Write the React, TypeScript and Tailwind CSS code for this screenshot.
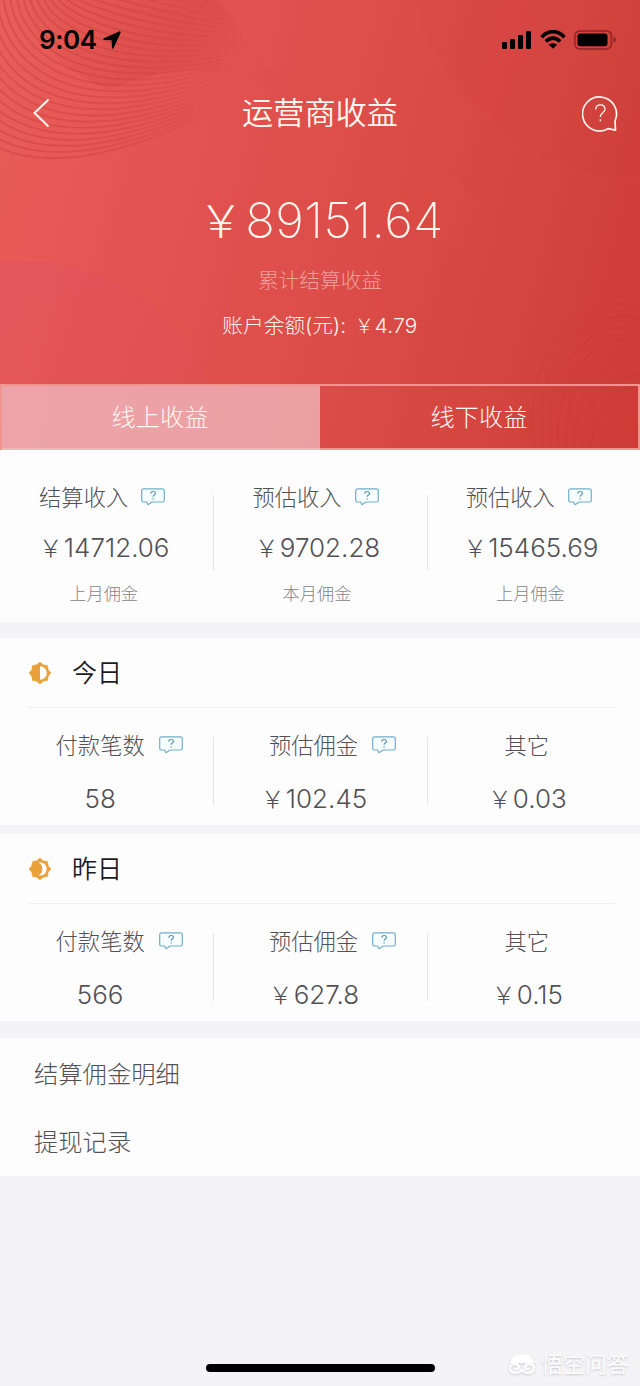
import type { ReactNode } from "react";

const CJK = "font-['Inter','Noto_Sans_CJK_SC',sans-serif]";

function Yen() {
  return <span className="inline-block w-[1em] text-center"><span className="text-[0.92em]">{"\uFFE5"}</span></span>;
}

function HelpBubble() {
  return (
    <svg width="24" height="18" viewBox="0 0 24 18" fill="#f6fdfe" stroke="#72adc9" strokeWidth="1.2" strokeLinejoin="round" className="mb-[2px]">
      <path d="M2.5.8h19a1.8 1.8 0 0 1 1.8 1.8v9.6a1.8 1.8 0 0 1-1.8 1.8H11.2L7 16.7 5.6 14H2.5A1.8 1.8 0 0 1 .7 12.200V2.600A1.800 1.800 0 0 1 2.500.8Z" />
      <path d="M9.700 5.600c.1-1.400 1-2.100 2.400-2.100s2.400.8 2.400 1.900c0 1.600-2.300 1.500-2.400 3.300M12.100 10.200v1.200" fill="none" stroke="#5f95ae" />
    </svg>
  );
}

function Waves() {
  const lines = Array.from({ length: 38 }, (_, i) => {
    const x = -76 + i * 6.6;
    const d = x - 5;
    return `M${x} -6C${x + 4} ${60 - d * 0.92} ${x + 80} ${118 - d * 1.35} 250 ${60 - d * 0.4}`;
  });
  return (
    <svg className="absolute inset-0" width="640" height="450" viewBox="0 0 640 450" fill="none">
      <defs>
        <linearGradient id="fade" x1="0" y1="0" x2="245" y2="40" gradientUnits="userSpaceOnUse">
          <stop offset="0" stopColor="#bd3533" stopOpacity=".36" />
          <stop offset=".55" stopColor="#bd3533" stopOpacity=".3" />
          <stop offset="1" stopColor="#bd3533" stopOpacity="0" />
        </linearGradient>
        <linearGradient id="hill" x1="60" y1="260" x2="170" y2="384" gradientUnits="userSpaceOnUse">
          <stop offset="0" stopColor="#dd5268" stopOpacity=".34" />
          <stop offset="1" stopColor="#dd4f5c" stopOpacity=".24" />
        </linearGradient>
        <linearGradient id="shade" x1="40" y1="0" x2="200" y2="110" gradientUnits="userSpaceOnUse">
          <stop offset="0" stopColor="#c93d3a" stopOpacity=".05" />
          <stop offset=".7" stopColor="#c93d3a" stopOpacity=".28" />
          <stop offset="1" stopColor="#c93d3a" stopOpacity=".03" />
        </linearGradient>
      </defs>
      <path d="M30 0H218C240 20 240 45 262 62C280 76 292 90 290 108C240 62 170 62 110 90C60 70 30 40 30 0Z" fill="url(#shade)" />
      {lines.map((d) => (
        <path key={d} d={d} stroke="url(#fade)" strokeWidth="1.900" />
      ))}
      <path d="M0 261C100 254 188 312 210 392V450H0Z" fill="url(#hill)" />
      <path d="M415 0C430 75 520 175 640 180V0Z" fill="#cc3a38" fillOpacity=".1" />
      <path d="M370 140C430 135 480 185 490 245C440 262 390 220 370 140Z" fill="#ea5b52" fillOpacity=".08" />
      {[0, 1, 2, 3, 4, 5, 6, 7].map((i) => (
        <path key={i} d={`M${535 + i * 8} 450C${520 + i * 10} ${350 + i * 10} ${580 + i * 5} ${292 + i * 12} 640 ${306 + i * 12}`} stroke="#b92f2e" strokeOpacity=".05" strokeWidth="2.500" />
      ))}
    </svg>
  );
}

function StatusBar() {
  return (
    <div className="flex h-[79px] items-center justify-between pl-[39px] pr-[23px] text-black">
      <div className="flex items-center gap-[6px]">
        <span className="text-[26px] font-semibold leading-[30px] tracking-[-0.4px]">9:04</span>
        <svg width="18" height="18" viewBox="0 0 18 18" fill="currentColor">
          <path d="M16 .5 1 7.300c-1.200.6-.9 1.500.2 1.600l7.400.4.4 7.400c.1 1.200 1.100 1.500 1.600.3L17.500 2C18 .8 17.200 0 16 .5Z" />
        </svg>
      </div>
      <div className="flex items-center gap-[8px]">
        <svg width="30" height="18" viewBox="0 0 30 18" fill="currentColor">
          <rect x="0" y="11" width="5" height="7" rx="1.200" />
          <rect x="8" y="8" width="5" height="10" rx="1.200" />
          <rect x="16" y="4" width="5" height="14" rx="1.200" />
          <rect x="24" y="0" width="5" height="18" rx="1.200" />
        </svg>
        <svg width="26" height="19" viewBox="0 0 26 19" fill="none" stroke="currentColor" strokeWidth="3.600">
          <path d="M1.600 7.200C8-.1 18-.1 24.400 7.200" />
          <path d="M5.900 11.500c4.200-4.500 10-4.500 14.200 0" />
          <path d="M13 18.800 8.900 14.700c2.400-2 5.800-2 8.200 0Z" fill="currentColor" stroke="none" />
        </svg>
        <svg width="43" height="20" viewBox="0 0 43 20" fill="none">
          <rect x=".9" y=".9" width="36.500" height="18" rx="5" stroke="#8d2423" strokeWidth="1.500" />
          <rect x="3.500" y="3.500" width="30" height="12.800" rx="2.800" fill="#000" />
          <path d="M39.500 6.800c3 .8 3 5.500 0 6.300Z" fill="#8d2423" />
        </svg>
      </div>
    </div>
  );
}

function Cell({ label, value, yen, note, help, today }: { label: string; value: string; yen?: boolean; note?: string; help?: boolean; today?: boolean }) {
  return (
    <div className={today ? "flex flex-col items-center pr-[13px]" : "flex flex-col items-center pr-[6px]"}>
      <div className={today ? (help ? "flex h-8 items-center gap-[14px] pl-[38px]" : "flex h-8 items-center") : "flex h-8 items-center gap-[13px] pr-[3px]"}>
        <span className="whitespace-nowrap text-[22.3px] font-light leading-8">{label}</span>
        {help && <HelpBubble />}
      </div>
      <div className={today ? "mt-[17px] flex h-10 items-center text-[26px] font-light leading-10" : "mt-[14px] flex h-10 items-center text-[26px] font-light leading-10"}>
        {yen && <Yen />}
        <span>{value}</span>
      </div>
      {note && <div className="mt-[14px] text-[17.200px] font-light leading-6 text-[#858489]">{note}</div>}
    </div>
  );
}

function Columns({ children, tall }: { children: ReactNode; tall?: boolean }) {
  return (
    <div className={tall ? "relative grid h-[172px] grid-cols-3 pt-8" : "relative grid h-[117px] grid-cols-3 pt-[22px]"}>
      {children}
      <div className={tall ? "absolute left-[213px] top-[45px] h-[75px] w-px bg-[#e6e5ea]" : "absolute left-[213px] top-[29px] h-[68px] w-px bg-[#e6e5ea]"} />
      <div className={tall ? "absolute left-[427px] top-[45px] h-[75px] w-px bg-[#e6e5ea]" : "absolute left-[427px] top-[29px] h-[68px] w-px bg-[#e6e5ea]"} />
    </div>
  );
}

function DayIcon({ moon }: { moon?: boolean }) {
  return (
    <svg width="24" height="24" viewBox="0 0 24 24">
      <path d="M12 1 14.900 3.800 19.500 4.500 20.200 8.700 23 12 20.200 15.300 19.500 19.500 15.300 20.200 12 23 8.700 20.200 4.500 19.500 3.800 15.300 1 12 3.800 8.700 4.500 4.500 8.700 3.800Z" fill="#e9a23b" stroke="#e9a23b" strokeWidth=".6" strokeLinejoin="round" />
      {moon ? (
        <path d="M10.500 5.600a6.600 6.600 0 1 1 0 12.800 7.200 7.200 0 0 0 0-12.800Z" fill="#fff" />
      ) : (
        <path d="M12 5.200a6.800 6.800 0 0 1 0 13.600Z" fill="#fff" />
      )}
    </svg>
  );
}

function Day({ title, count, estimate, other, moon }: { title: string; count: string; estimate: string; other: string; moon?: boolean }) {
  return (
    <section className="bg-[#fefdfe]">
      <div className="mr-[25px] ml-7 flex h-[70px] items-center gap-5 border-b border-[#f1f0f4]">
        <DayIcon moon={moon} />
        <h2 className="text-[25px] font-[350] leading-8 text-[#1c1b1f]">{title}</h2>
      </div>
      <Columns>
        <Cell today help label="付款笔数" value={count} />
        <Cell today help yen label="预估佣金" value={estimate} />
        <Cell today yen label="其它" value={other} />
      </Columns>
    </section>
  );
}

export default function App() {
  return (
    <main className={`${CJK} relative flex h-[1386px] w-[640px] flex-col overflow-hidden bg-[#f4f3f6] text-[#525155]`}>
      <header className="relative h-[450px] bg-[linear-gradient(105deg,#e95e59_0%,#e25351_30%,#dc4c48_55%,#d44540_78%,#cd3b37_100%)]">
        <Waves />
        <div className="relative text-[#fff6ee]">
          <StatusBar />
          <div className="flex h-[68px] items-center justify-between pl-[33px] pr-[21px]">
            <svg width="36" height="30" viewBox="0 0 36 30" fill="none" stroke="currentColor" strokeWidth="2">
              <path d="M15.500 1.500 1.500 15l14 13.500" />
            </svg>
            <h1 className="pr-[11px] text-[31.200px] font-[350] leading-10">运营商收益</h1>
            <svg width="37" height="37" viewBox="0 0 37 37" fill="none" stroke="currentColor" strokeWidth="1.700">
              <path d="M33 26A17 17 0 1 0 26 33.700L33.500 35.200Z" strokeLinejoin="round" />
              <path d="M13.700 14.500c0-3.100 1.900-4.700 4.600-4.700 2.800 0 4.700 1.700 4.700 4.200 0 3.700-4.700 3.700-4.700 8M18.300 24.300v2" strokeWidth="1.300" />
            </svg>
          </div>
          <div className="mt-[44px] flex h-[60px] items-center justify-center text-[49px] font-extralight leading-[60px]">
            <Yen />
            <span className="tracking-[0.5px]">89151.64</span>
          </div>
          <p className="mt-[18px] text-center text-[20.700px] font-light leading-6 text-[#f0a09b]">累计结算收益</p>
          <p className="mt-[21px] flex justify-center text-[20.700px] font-light leading-6">
            <span>账户余额(元):</span>
            <span className="ml-[8px] tracking-[0.3px]"><Yen />4.79</span>
          </p>
        </div>
        <div className="absolute inset-x-0 bottom-0 grid h-[66px] grid-cols-2 border-2 border-[#f09490] text-center text-[24.200px] font-light leading-[64px] text-[#fff6f2]">
          <div className="bg-[#f1c4c9]/70 pr-[2px]">线上收益</div>
          <div>线下收益</div>
        </div>
      </header>
      <section className="bg-[#fefdfe]">
        <Columns tall>
          <Cell help yen label="结算收入" value="14712.06" note="上月佣金" />
          <Cell help yen label="预估收入" value="9702.28" note="本月佣金" />
          <Cell help yen label="预估收入" value="15465.69" note="上月佣金" />
        </Columns>
      </section>
      <div className="h-4" />
      <Day title="今日" count="58" estimate="102.45" other="0.03" />
      <div className="h-[9px]" />
      <Day moon title="昨日" count="566" estimate="627.8" other="0.15" />
      <div className="h-[17px]" />
      <nav className="bg-[#fefdfe] pl-[34px] text-[24.300px] font-light">
        <div className="h-[69px] leading-[73px]">结算佣金明细</div>
        <div className="h-[69px] leading-[71px]">提现记录</div>
      </nav>
      <div className="absolute bottom-[14px] left-[206px] h-2 w-[229px] rounded-full bg-black" />
      <div className="absolute bottom-[8px] left-[508px] flex items-center gap-[5px] text-white">
        <svg width="28" height="22" viewBox="0 0 28 22" fill="none" stroke="#fff" strokeWidth="2.500" className="drop-shadow-[0_1px_1px_#cfced4]">
          <path d="M3 9C7 0 21 0 25 9Z" fill="#fff" />
          <path d="M14 16c-2 5-12 5-12-1 0-5 8-5 9-1 0 2-3 3-4 1M14 16c2 5 12 5 12-1 0-5-8-5-9-1 0 2 3 3 4 1" />
        </svg>
        <span className="text-[22px] font-normal leading-7 [text-shadow:0_1px_2px_#c6c5cb]">悟空问答</span>
      </div>
    </main>
  );
}
